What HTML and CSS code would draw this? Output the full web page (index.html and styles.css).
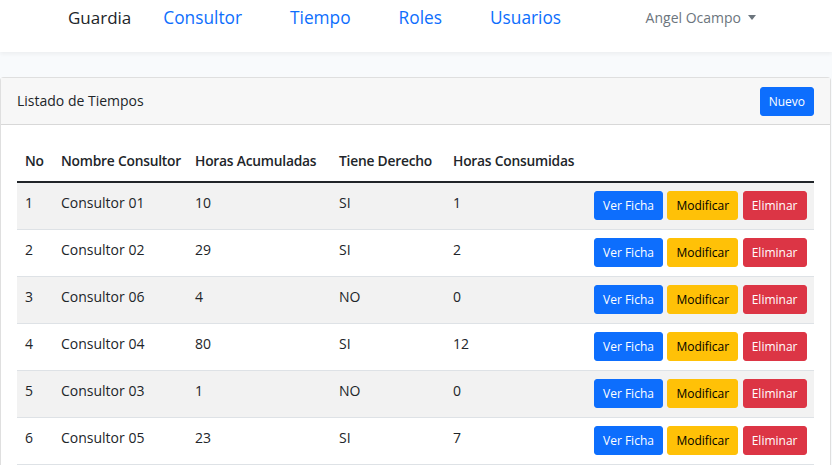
FILE: index.html
```html
<!DOCTYPE html>
<html lang="es">
<head>
<meta charset="utf-8">
<title>Listado de Tiempos</title>
<link rel="stylesheet" href="styles.css">
</head>
<body>
<nav class="navbar">
  <div class="nav-inner">
    <a class="brand" href="#">Guardia</a>
    <ul class="nav-links">
      <li><a href="#">Consultor</a></li>
      <li><a href="#">Tiempo</a></li>
      <li><a href="#">Roles</a></li>
      <li><a href="#">Usuarios</a></li>
    </ul>
    <a class="user" href="#">Angel Ocampo <span class="caret"></span></a>
  </div>
</nav>
<main class="main">
  <div class="card">
    <div class="card-header">
      <span>Listado de Tiempos</span>
      <a class="btn btn-primary" href="#">Nuevo</a>
    </div>
    <div class="card-body">
      <table class="table">
        <colgroup>
          <col class="c1"><col class="c2"><col class="c3"><col class="c4"><col class="c5"><col class="c6">
        </colgroup>
        <thead>
          <tr><th>No</th><th>Nombre Consultor</th><th>Horas Acumuladas</th><th>Tiene Derecho</th><th>Horas Consumidas</th><th></th></tr>
        </thead>
        <tbody>
          <tr><td>1</td><td>Consultor 01</td><td>10</td><td>SI</td><td>1</td><td class="actions"><a class="btn btn-primary">Ver Ficha</a><a class="btn btn-warning">Modificar</a><a class="btn btn-danger">Eliminar</a></td></tr>
          <tr><td>2</td><td>Consultor 02</td><td>29</td><td>SI</td><td>2</td><td class="actions"><a class="btn btn-primary">Ver Ficha</a><a class="btn btn-warning">Modificar</a><a class="btn btn-danger">Eliminar</a></td></tr>
          <tr><td>3</td><td>Consultor 06</td><td>4</td><td>NO</td><td>0</td><td class="actions"><a class="btn btn-primary">Ver Ficha</a><a class="btn btn-warning">Modificar</a><a class="btn btn-danger">Eliminar</a></td></tr>
          <tr><td>4</td><td>Consultor 04</td><td>80</td><td>SI</td><td>12</td><td class="actions"><a class="btn btn-primary">Ver Ficha</a><a class="btn btn-warning">Modificar</a><a class="btn btn-danger">Eliminar</a></td></tr>
          <tr><td>5</td><td>Consultor 03</td><td>1</td><td>NO</td><td>0</td><td class="actions"><a class="btn btn-primary">Ver Ficha</a><a class="btn btn-warning">Modificar</a><a class="btn btn-danger">Eliminar</a></td></tr>
          <tr><td>6</td><td>Consultor 05</td><td>23</td><td>SI</td><td>7</td><td class="actions"><a class="btn btn-primary">Ver Ficha</a><a class="btn btn-warning">Modificar</a><a class="btn btn-danger">Eliminar</a></td></tr>
        </tbody>
      </table>
    </div>
  </div>
</main>
</body>
</html>
```

FILE: styles.css
```css
* { box-sizing: border-box; }
html, body { margin: 0; padding: 0; }
body {
  font-family: "Open Sans", "Noto Sans", sans-serif;
  font-size: 14px;
  line-height: 1.6;
  color: #212529;
  background: #f8fafc;
}
a { text-decoration: none; }

.navbar {
  background: #fff;
  height: 52px;
  box-shadow: 0 2px 4px rgba(0,0,0,.05);
}
.nav-inner {
  width: 720px;
  margin: 0 auto;
  padding: 4px 12px 0;
  display: flex;
  align-items: flex-start;
}
.brand {
  font-size: 17px;
  line-height: 28px;
  color: #212529;
  margin-right: 8px;
}
.nav-links {
  list-style: none;
  margin: 0;
  padding: 0;
  display: flex;
}
.nav-links a {
  display: block;
  font-size: 17.3px;
  line-height: 28px;
  color: #0d6efd;
  padding: 0 24px;
}
.user {
  margin-left: auto;
  font-size: 14px;
  line-height: 28px;
  color: #6c757d;
  padding-right: 8px;
  display: flex;
  align-items: center;
}
.caret {
  display: inline-block;
  margin-left: 7px;
  width: 0;
  height: 0;
  border-left: 4px solid transparent;
  border-right: 4px solid transparent;
  border-top: 5px solid #6c757d;
  margin-top: -2px;
}

.main { padding-top: 25px; }
.card {
  background: #fff;
  border: 1px solid rgba(0,0,0,.125);
  border-radius: 4px;
  width: 831px;
}
.card-header {
  background: #f7f7f7;
  border-bottom: 1px solid rgba(0,0,0,.125);
  padding: 8px 16px;
  display: flex;
  justify-content: space-between;
  align-items: center;
  height: 47px;
}
.card-body { padding: 16px; }

.btn {
  display: inline-block;
  font-size: 12px;
  line-height: 19px;
  padding: 4px 8px;
  border: 1px solid transparent;
  border-radius: 3px;
  color: #fff;
  cursor: pointer;
  vertical-align: top;
}
.btn-primary { background: #0d6efd; border-color: #0d6efd; }
.btn-warning { background: #ffc107; border-color: #ffc107; color: #000; }
.btn-danger { background: #dc3545; border-color: #dc3545; }
.actions .btn + .btn { margin-left: 4.5px; }

.table {
  width: 100%;
  border-collapse: collapse;
  table-layout: fixed;
}
.c1 { width: 36px; }
.c2 { width: 134px; }
.c3 { width: 144px; }
.c4 { width: 114px; }
.c5 { width: 141px; }
.table th {
  text-align: left;
  font-weight: 600;
  font-size: 13.8px;
  letter-spacing: -0.22px;
  padding: 8px;
  line-height: 24px;
  border-bottom: 2px solid #212529;
  white-space: nowrap;
}
.table td {
  padding: 8px;
  border-bottom: 1px solid #dee2e6;
  vertical-align: top;
  line-height: 23px;
  white-space: nowrap;
}
.table tbody tr:nth-child(odd) td { background: #f2f2f2; }
.table td.actions {
  text-align: right;
  line-height: 19px;
  height: 47px;
}
```
